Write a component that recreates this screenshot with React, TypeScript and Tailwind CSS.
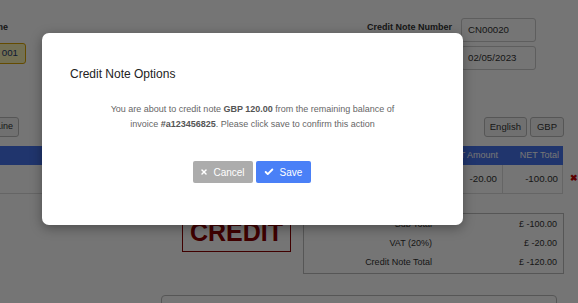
import { Check, X } from "lucide-react";

const font = { fontFamily: '"Liberation Sans", Arial, sans-serif' };

function Input({ value, className = "" }: { value: string; className?: string }) {
  return (
    <div
      className={`flex h-6 w-[75px] items-center rounded-[3px] border border-[#cccccc] bg-white px-[6px] text-[9.7px] text-[#333] ${className}`}
    >
      {value}
    </div>
  );
}

function TotalRow({ label, value }: { label: string; value: string }) {
  return (
    <div className="flex h-[19px] items-center text-[9px] text-[#333]">
      <div className="w-[128px] text-right">{label}</div>
      <div className="flex-1 pr-[6px] text-right">{value}</div>
    </div>
  );
}

export default function App() {
  return (
    <div className="relative h-[303px] w-[578px] overflow-hidden bg-white" style={font}>
      {/* page behind the dialog */}
      <div className="flex flex-col">
        {/* header fields */}
        <div className="flex h-[117px] pt-[18px]">
          <div className="flex w-[26px] flex-col items-end overflow-hidden">
            <div className="mt-[3px] w-[60px] shrink-0 pr-[18px] text-right text-[9px] font-bold text-[#333]">Name</div>
            <div className="mt-[8px] flex h-[21px] w-[60px] shrink-0 items-center justify-end rounded-r-[3px] border border-[#d9a400] bg-[#fbf3b8] pr-[7px] text-[9.7px] text-[#1f3b70]">
              Ref 001
            </div>
          </div>
          <div className="flex flex-1 justify-end pr-[42px]">
            <div className="mr-[9px] mt-[3px] text-[9px] font-bold text-[#333]">Credit Note Number</div>
            <div className="flex flex-col gap-[4px]">
              <Input value="CN00020" />
              <Input value="02/05/2023" className="text-[#111]" />
            </div>
          </div>
        </div>

        {/* toolbar */}
        <div className="flex h-[20px] items-center">
          <div className="flex w-[19px] justify-end overflow-hidden">
            <div className="flex h-[20px] shrink-0 items-center rounded-[3px] border border-[#bbb] bg-[#f5f5f5] px-[5px] text-[9px] text-[#333]">
              Add Line
            </div>
          </div>
          <div className="flex flex-1 justify-end gap-[3px] pr-[14px]">
            <div className="flex h-[20px] items-center rounded-[3px] border border-[#bbb] bg-[#f5f5f5] px-[5px] text-[9.5px] text-[#333]">
              English
            </div>
            <div className="flex h-[20px] items-center rounded-[3px] border border-[#bbb] bg-[#f5f5f5] px-[6px] text-[9.5px] text-[#333]">
              GBP
            </div>
          </div>
        </div>

        {/* lines table */}
        <div className="mt-[9px] flex">
          <div className="w-[564px]">
            <div className="flex h-[19px] items-center bg-[#4673ee] text-[9px] text-white">
              <div className="flex-1 pr-[5px] text-right">VAT Amount</div>
              <div className="w-[60px] pr-[4px] text-right">NET Total</div>
            </div>
            <div className="flex h-[29px] border-b border-[#ddd] text-[9.7px] text-[#333]">
              <div className="flex flex-1 items-center justify-end border-r border-[#ddd] pr-[5px]">-20.00</div>
              <div className="flex w-[60px] items-center justify-end border-r border-[#ddd] pr-[4px]">-100.00</div>
            </div>
          </div>
          <div className="ml-[7px] mt-[28px] text-[9px] font-bold leading-none text-[#cc0000]">✖</div>
        </div>

        {/* credit stamp + totals */}
        <div className="mt-[19px] flex">
          <div className="ml-[182px] flex h-[39px] w-[109px] items-center justify-center border border-[#8b0000] text-[25px] font-bold text-[#8b0000]">
            CREDIT
          </div>
          <div className="ml-[12px] w-[261px] border border-[#bbb] py-[1px]">
            <TotalRow label="Sub Total" value="£ -100.00" />
            <TotalRow label="VAT (20%)" value="£ -20.00" />
            <TotalRow label="Credit Note Total" value="£ -120.00" />
          </div>
        </div>

        <div className="ml-[161px] mt-[21px] h-[40px] w-[396px] rounded-[4px] border border-[#bbb]" />
      </div>

      {/* backdrop */}
      <div className="absolute inset-0 bg-black/[0.54]" />

      {/* dialog */}
      <div className="absolute left-[42px] top-[33px] flex h-[192px] w-[421px] flex-col rounded-[7px] bg-white shadow-[0_3px_12px_rgba(0,0,0,0.35)]">
        <div className="pl-[28px] pt-[34px] text-[12px] leading-[14px] text-[#222]">Credit Note Options</div>
        <div className="mt-[21px] px-[20px] text-center text-[9px] leading-[15px] text-[#666]">
          You are about to credit note <b className="text-[#555]">GBP 120.00</b> from the remaining balance of
          <br />
          invoice <b className="text-[#555]">#a123456825</b>. Please click save to confirm this action
        </div>
        <div className="mt-[29px] flex justify-center gap-[3px] pr-[2px]">
          <button className="flex h-[22px] w-[60px] items-center justify-center gap-[5px] rounded-[2px] bg-[#acacac] text-[10px] text-white">
            <X size={8} strokeWidth={4.5} />
            Cancel
          </button>
          <button className="flex h-[22px] w-[55px] items-center justify-center gap-[6px] rounded-[2px] bg-[#4a80f7] text-[10px] text-white">
            <Check size={10} strokeWidth={4.5} />
            Save
          </button>
        </div>
      </div>
    </div>
  );
}
